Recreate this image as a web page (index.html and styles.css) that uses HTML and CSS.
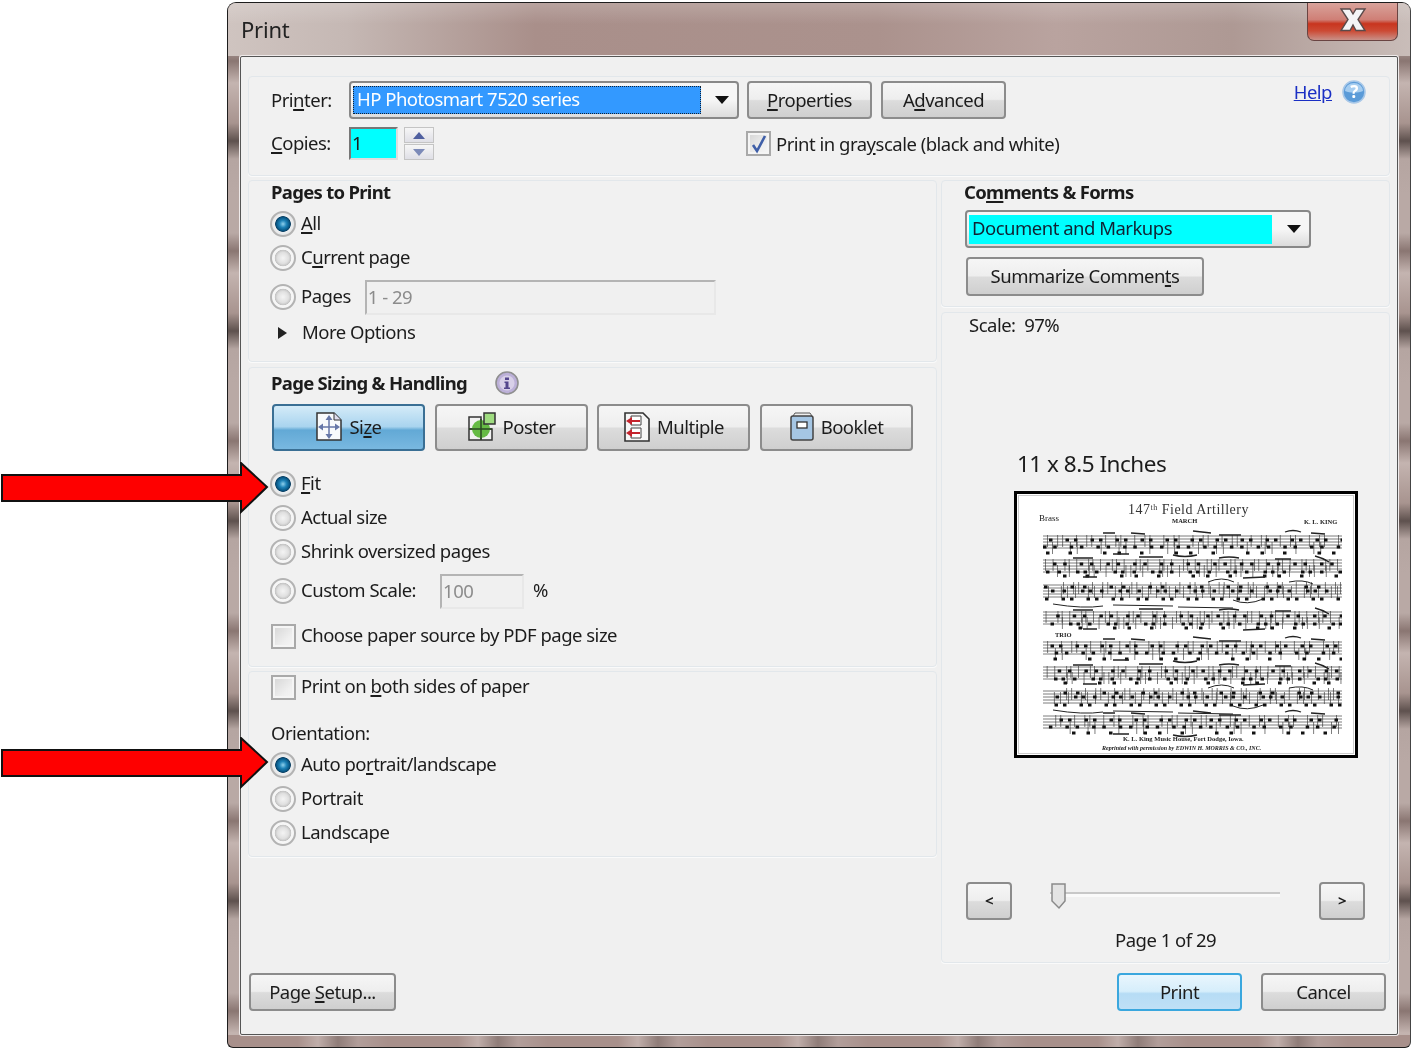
FILE: index.html
```html
<!DOCTYPE html>
<html lang="en">
<head>
<meta charset="utf-8">
<title>Print</title>
<link rel="stylesheet" href="styles.css">
</head>
<body>
<div class="window">
  <header class="titlebar">
    <span class="title">Print</span>
    <button class="close" aria-label="Close"><svg width="32" height="26" viewBox="0 0 30 26"><path d="M3 2h9l3 5 3-5h9l-7 10.500 7 11h-9l-3-5.500-3 5.500H3l7-11z" fill="#f4f4f6" stroke="#5a4a4a" stroke-width="1.400"/></svg></button>
  </header>
  <main class="client">
    <section class="panel top">
      <div class="row r1">
        <span class="lbl">Pri<u>n</u>ter:</span>
        <div class="select printer"><span class="sel-val">HP Photosmart 7520 series</span><i class="caret"></i></div>
        <button class="btn b125"><span><u>P</u>roperties</span></button>
        <button class="btn b125"><span>A<u>d</u>vanced</span></button>
        <a class="help">Help</a>
        <svg class="help-ic" width="24" height="24" viewBox="0 0 24 24"><circle cx="12" cy="12" r="11" fill="#5b9bd8" stroke="#a9c8e8" stroke-width="1.600"/><path d="M3 11a9 8 0 0 1 18 0c-5 2-13 2-18 0z" fill="#a6cdf0"/><text x="12" y="18" class="qm">?</text></svg>
      </div>
      <div class="row r2">
        <span class="lbl"><u>C</u>opies:</span>
        <div class="copies">1</div>
        <div class="spin"><b class="up"></b><b class="down"></b></div>
        <span class="check on gray"><svg width="16" height="20" viewBox="0 0 16 20"><path d="M2 11l4 6 8-15" fill="none" stroke="#3f5fa8" stroke-width="2.600"/></svg></span>
        <span class="txt">Print in gra<u>y</u>scale (black and white)</span>
      </div>
    </section>

    <div class="cols">
      <div class="col left">
        <section class="panel pages">
          <h2 class="ptitle">Pages to Print</h2>
          <div class="opt first"><i class="radio on"></i><span><u>A</u>ll</span></div>
          <div class="opt"><i class="radio"></i><span>C<u>u</u>rrent page</span></div>
          <div class="opt gap5"><i class="radio"></i><span>Pa<u>g</u>es</span><div class="field fpages">1 - 29</div></div>
          <div class="opt more"><i class="tri"></i><span>More Options</span></div>
        </section>
        <section class="panel sizing">
          <div class="ptitle-row"><h2 class="ptitle">Page Sizing &amp; Handling</h2>
            <svg width="26" height="26" viewBox="0 0 26 26"><circle cx="13" cy="13" r="11" fill="#bcb0d8" stroke="#8f8f8f" stroke-width="1.600"/><circle cx="13" cy="13" r="7.600" fill="#d8d0e8"/><path d="M11 7.500h4v2.400h-4zM10.500 11.500h4v6h1.500v1.500h-6v-1.500h1.500v-4.500h-1z" fill="#54468c"/></svg>
          </div>
          <div class="tabs">
            <button class="tab active">
              <svg width="28" height="31" viewBox="0 0 28 31"><path d="M2 2h17l7 7v20H2z" fill="#f8fafc" stroke="#333" stroke-width="1.500"/><path d="M19 2v7h7" fill="#dde" stroke="#333"/><path d="M14 6v19M5 16h18" stroke="#6677a8" stroke-width="1.500"/><path d="M14 4l-3.500 5h7zM14 28l-3.500-5h7zM3 16l5-3.500v7zM25 16l-5-3.500v7z" fill="#6677a8"/></svg>
              <span>Si<u>z</u>e</span>
            </button>
            <button class="tab">
              <svg width="30" height="31" viewBox="0 0 30 31"><path d="M2 6h12v12H2zM2 18h12v11H2zM14 18h11v11H14z" fill="#f2f2f2" stroke="#333" stroke-width="1.500"/><circle cx="14" cy="18" r="9" fill="#66bb44"/><path d="M14 8v21M2 18h23" stroke="#2a4a20" stroke-width="1.500"/><path d="M17 2h11v11H17z" fill="#9fdc80" stroke="#333" stroke-width="1.500"/></svg>
              <span>Poster</span>
            </button>
            <button class="tab">
              <svg width="28" height="32" viewBox="0 0 28 32"><path d="M2 2h18l6 6v22H2z" fill="#f6f6f6" stroke="#333" stroke-width="1.600"/><path d="M8 5h10v9H8zM8 17h10v10H8z" fill="#fff" stroke="#444"/><path d="M3 10l6-4v3h8v2H9v3zM3 22l6-4v3h8v2H9v3z" fill="#c4232c"/></svg>
              <span>Multiple</span>
            </button>
            <button class="tab">
              <svg width="26" height="31" viewBox="0 0 26 31"><path d="M4 5l2-3h15l2 3" fill="#eee" stroke="#555"/><rect x="2" y="5" width="22" height="24" rx="2" fill="#a5c6e4" stroke="#444" stroke-width="1.500"/><rect x="8" y="11" width="10" height="6" fill="#fff" stroke="#333" stroke-width="1.300"/></svg>
              <span>Booklet</span>
            </button>
          </div>
          <div class="opt fit"><i class="radio on"></i><span><u>F</u>it</span></div>
          <div class="opt"><i class="radio"></i><span>Actual size</span></div>
          <div class="opt"><i class="radio"></i><span>Shrink oversized pages</span></div>
          <div class="opt gap5"><i class="radio"></i><span>Custom Scale:</span><div class="field fscale">100</div><span class="pct">%</span></div>
          <div class="opt gap11"><i class="check"></i><span>Choose paper source by PDF page size</span></div>
        </section>
        <section class="panel orient">
          <div class="opt tight"><i class="check"></i><span>Print on <u>b</u>oth sides of paper</span></div>
          <div class="orient-lbl">Orientation:</div>
          <div class="opt"><i class="radio on"></i><span>Auto po<u>r</u>trait/landscape</span></div>
          <div class="opt"><i class="radio"></i><span>Portrait</span></div>
          <div class="opt"><i class="radio"></i><span>Landscape</span></div>
        </section>
      </div>

      <div class="col right">
        <section class="panel comments">
          <h2 class="ptitle">Co<u>m</u>ments &amp; Forms</h2>
          <div class="select docsel"><span class="sel-val cyan">Document and Markups</span><i class="caret"></i></div>
          <button class="btn summ"><span>Summarize Commen<u>t</u>s</span></button>
        </section>
        <section class="panel preview">
          <div class="scale">Scale:&nbsp; 97%</div>
          <div class="ptext">11 x 8.5 Inches</div>
          <div class="score">
            <svg width="338" height="261" viewBox="0 0 338 261">
              <defs>
                <path id="lines" class="sl" d="M0-6H299M0-3H299M0 0H299M0 3H299M0 6H299"/>
                <g id="st1">
                  <use href="#lines"/>
                  <path class="stem d1" d="M4-1H299"/><path class="stem d4" d="M9 6H299"/><path class="head h1" d="M0 5H299"/><path class="head h2" d="M6-2H299"/><path class="head h4" d="M3 11H299"/>
                  <path class="beam" d="M60-9h12M88-9l14 1M150-11l18 2M176-7h22M242-10q8-3 16 0M268-9l14 1M130 13q12 3 24 0M70 12h16"/>
                </g>
                <g id="st2">
                  <use href="#lines"/>
                  <path class="stem d2" d="M2-1H299"/><path class="stem d5" d="M14 5H299"/><path class="head h3" d="M3 6H299"/><path class="head h1" d="M10-2H299"/><path class="head h4" d="M20 10H299"/>
                  <path class="beam" d="M30-8h20M96-9h24M176-8q10-2 20 0M232-7h16M272-10q8 2 14 6M40 11h14M200 12l22-1"/>
                </g>
                <g id="st3">
                  <use href="#lines"/>
                  <path class="stem d3" d="M5 1H299"/><path class="stem d1" d="M20-3H299"/><path class="head h2" d="M2 8H299"/><path class="head h3" d="M8 0H299"/><path class="head h5" d="M1-4H299"/>
                  <path class="beam thick" d="M10 13q30 5 50 2M70 14l60 1M135 16l55 1M165-9q14-6 26 0M190 9q14 6 30-1M246-9q14-3 24 2"/>
                </g>
              </defs>
              <text x="111" y="20" class="sc-title">147<tspan class="sup" dy="-4">th</tspan><tspan dy="4"> Field  Artillery</tspan></text>
              <text x="155" y="29" class="sc-sm">MARCH</text>
              <text x="22" y="27" class="sc-sm wide">Brass</text>
              <text x="287" y="30" class="sc-sm">K. L. KING</text>
              <use href="#st1" x="26" y="48"/>
              <use href="#st2" x="26" y="72"/>
              <use href="#st3" x="26" y="97"/>
              <use href="#st2" x="26" y="124" class="o1"/>
              <text x="38" y="143" class="sc-sm">TRIO</text>
              <use href="#st1" x="26" y="154" class="o2"/>
              <use href="#st2" x="26" y="179" class="o3"/>
              <use href="#st3" x="26" y="203" class="o1"/>
              <use href="#st1" x="26" y="228" class="o4"/>
              <text x="106" y="247" class="sc-sm">K. L. King Music House, Fort Dodge, Iowa.</text>
              <text x="85" y="256" class="sc-sm it">Reprinted with permission by EDWIN H. MORRIS &amp; CO., INC.</text>
            </svg>
          </div>
          <div class="nav">
            <button class="btn nbtn"><span>&lt;</span></button>
            <div class="slider"><svg width="18" height="28" viewBox="0 0 18 28"><path d="M2 2h13v17l-6 7-7-7z" fill="#e4e4e4" stroke="#8a8a8a" stroke-width="1.500"/></svg></div>
            <button class="btn nbtn"><span>&gt;</span></button>
          </div>
          <div class="pageno">Page 1 of 29</div>
        </section>
      </div>
    </div>

    <footer class="foot">
      <button class="btn setup"><span>Page <u>S</u>etup...</span></button>
      <button class="btn b125 primary"><span>Print</span></button>
      <button class="btn b125"><span>Cancel</span></button>
    </footer>
  </main>
</div>

<svg class="arrow a1" width="272" height="54" viewBox="0 0 272 54"><path d="M2 13H241V1L267 25 241 50V39H2z" fill="#fe0000" stroke="#111" stroke-width="2"/></svg>
<svg class="arrow a2" width="272" height="54" viewBox="0 0 272 54"><path d="M2 13H241V1L267 25 241 50V39H2z" fill="#fe0000" stroke="#111" stroke-width="2"/></svg>
</body>
</html>
```

FILE: styles.css
```css
* { box-sizing: border-box; }
html, body { margin: 0; height: 1050px; overflow: hidden; background: #fff; }
body { font-family: "Noto Sans", "Open Sans", sans-serif; font-size: 18.500px; color: #1c1c1c; letter-spacing: -0.5px; position: relative; }
u { text-underline-offset: 2px; text-decoration-thickness: 1.500px; }
button { font: inherit; letter-spacing: inherit; color: inherit; padding: 0 0 2px; }

.window {
  width: 1184px; height: 1046px; margin: 2px 0 0 227px; padding: 0 12px 12px;
  border: 1px solid #1d1d1d; border-right-color: #444; border-radius: 9px 9px 6px 6px;
  background:
    repeating-linear-gradient(90deg, #a8908b 0 70px, #c0aeaa 90px, #8f7c78 110px, #b29e9a 130px, #a8908b 160px) bottom / 100% 12px no-repeat,
    repeating-linear-gradient(180deg, #b9a9a5 0 40px, #8a7672 58px, #c4b4b0 80px, #a8948f 120px, #5e514e 138px, #b5a5a1 156px, #b9a9a5 190px);
  filter: blur(0.45px);
}
.titlebar {
  height: 53px; margin: 0 -12px; padding: 0 12px 0 13px; display: flex; justify-content: space-between; align-items: flex-start;
  border-radius: 8px 8px 0 0;
  background:
    linear-gradient(180deg, rgba(255,255,255,.18), rgba(255,255,255,0) 40%),
    linear-gradient(90deg, #cfc4c0 0, #c5b8b4 10%, #a98f8a 26%, #ab928d 55%, #b9a39f 70%, #ae9994 85%, #c9bdb9 100%);
}
.title { font-size: 22px; line-height: 30px; margin-top: 11px; color: #222; letter-spacing: -0.2px; }
.close {
  width: 91px; height: 38px; border: 1px solid #6a4442; border-top: 0; border-radius: 0 0 7px 7px; display: flex; align-items: center; justify-content: center; padding-bottom: 3px;
  background: linear-gradient(180deg, #d9a39b 0, #cf7f76 45%, #c8351f 56%, #cc4a34 75%, #c99088 100%);
}
.client {
  width: 1158px; height: 979px; padding: 19px 7px 0; border: 1px solid #555; border-radius: 2px; background: #f0f0f0;
  box-shadow: 0 0 0 1px #efeaea;
  display: flex; flex-direction: column;
}
.panel { border: 1px solid #e2e7eb; border-radius: 4px; background: #f1f1f1; box-shadow: 0 1px 0 #fafafa; flex: none; }
.top { height: 100px; padding: 4px 23px 0 22px; }
.row { display: flex; align-items: center; }
.r1 { height: 38px; }
.r2 { height: 33px; margin-top: 8px; }
.lbl { width: 78px; margin-bottom: 2px; }
.txt { margin-bottom: 1px; }
.select { display: flex; align-items: center; height: 38px; border: 2px solid #888; border-radius: 4px; background: linear-gradient(#f6f6f6 50%, #dcdcdc); padding: 2px; }
.printer { width: 390px; margin-right: 8px; }
.sel-val { display: block; height: 28px; line-height: 26px; padding-left: 4px; flex: 1; }
.printer .sel-val { background: #3399ff; color: #fff; outline: 1px dotted #123; outline-offset: -1px; }
.cyan { background: #00ffff; color: #123; }
.caret { width: 34px; flex: none; height: 0; display: flex; justify-content: center; position: relative; }
.caret::after { content: ""; position: absolute; left: 14px; top: -4px; border: 7px solid transparent; border-top: 8px solid #111; border-bottom: 0; }
.btn {
  display: inline-flex; align-items: center; justify-content: center; height: 38px; border: 2px solid #8c8c8c; border-radius: 4px; flex: none;
  background: linear-gradient(180deg, #f6f6f6 0, #eeeeee 48%, #dcdcdc 52%, #cfcfcf 100%);
}
.b125 { width: 125px; margin-right: 9px; }
.help { margin-left: auto; align-self: flex-start; margin-top: -2px; color: #1a2fc4; text-decoration: underline; line-height: 26px; }
.help-ic { align-self: flex-start; margin: -1px 0 0 10px; }
.qm { font-size: 17px; font-weight: 700; fill: #fff; text-anchor: middle; }
.copies { width: 49px; height: 33px; background: #00ffff; border: 2px solid #777; border-right-color: #ddd; border-bottom-color: #ddd; line-height: 27px; padding-left: 1px; }
.spin { width: 30px; height: 33px; margin-left: 6px; display: flex; flex-direction: column; gap: 1px; }
.spin b { flex: 1; border: 1px solid #c4c4c4; background: linear-gradient(#f6f6f6, #dfdfe6); position: relative; }
.spin b::after { content: ""; position: absolute; left: 8px; top: 4px; border: 6px solid transparent; }
.up::after { border-bottom: 7px solid #4f5f9f !important; border-top: 0 !important; }
.down::after { border-top: 7px solid #7c8ab8 !important; border-bottom: 0 !important; }
.gray { margin-left: 312px; margin-right: 5px; }
.check { width: 25px; height: 25px; flex: none; border: 2px solid #a9a9a9; background: linear-gradient(135deg, #d4d4d4, #efefef 65%, #f6f6f6); box-shadow: inset 0 0 0 2px #f5f5f5; display: flex; align-items: center; justify-content: center; }
.cols { display: flex; gap: 4px; margin-top: 4px; flex: none; height: 783px; }
.col { display: flex; flex-direction: column; }
.left { width: 689px; }
.right { width: 449px; }
.pages { height: 182px; padding: 0 22px; }
.sizing { height: 300px; margin-top: 5px; padding: 3px 22px 0; }
.orient { height: 186px; margin-top: 4px; padding: 0 22px; }
.ptitle { margin: 0; font-size: 18.500px; font-weight: 700; line-height: 21px; padding-bottom: 2px; letter-spacing: -0.7px; }
.ptitle-row { display: flex; align-items: center; gap: 27px; height: 24px; }
.opt { height: 34px; display: flex; align-items: center; gap: 5px; }
.opt > span { margin-bottom: 3px; }
.opt.first { margin-top: 3px; }
.gap5 { margin-top: 5px; }
.gap11 { margin-top: 11px; }
.radio { width: 26px; height: 26px; flex: none; margin-left: -1px; border-radius: 50%; border: 2px solid #b3b3b3; background: radial-gradient(circle closest-side, #f4f4f4 0, #e0e0e0 50%, #c4c4c4 72%, #f6f6f6 78%); }
.radio.on { background: radial-gradient(circle closest-side at 50% 50%, #8fd0ec 0, #1f83b8 32%, #075583 60%, #0a3f62 68%, #eef0f2 74%, #e6e6e6 100%); }
.field { height: 35px; border: 2px solid #b4b4b4; border-right-color: #e8e8e8; border-bottom-color: #e8e8e8; color: #8c8c8c; line-height: 29px; padding-left: 1px; background: #f0f0f0; }
.fpages { width: 351px; margin-left: 9px; }
.fscale { width: 84px; margin-left: 19px; }
.pct { margin-left: 4px; }
.more { margin-top: 2px; padding-left: 7px; }
.tri { border: 6px solid transparent; border-left: 9px solid #222; border-right: 0; margin-right: 10px; }
.tabs { display: flex; gap: 9.500px; margin: 9px 0 16px 1px; }
.tab {
  width: 153px; height: 47px; flex: none; display: flex; align-items: center; justify-content: center; gap: 6px; border: 2px solid #8c8c8c; border-radius: 4px; padding-bottom: 2px;
  background: linear-gradient(180deg, #f6f6f6 0, #eeeeee 48%, #dcdcdc 52%, #cfcfcf 100%);
}
.tab.active { border-color: #3a6f94; background: linear-gradient(180deg, #d4ebf8 0, #a9d4ef 48%, #62a9d6 56%, #79b8e0 100%); }
.primary { border-color: #3aa7de; margin-left: auto; margin-right: 19px; background: linear-gradient(180deg, #e9f6fd 0, #d6eefb 48%, #b6dcf5 55%, #bfe0f6 100%); }
.fit { margin-top: 0; }
.tight { height: 30px; }
.orient-lbl { height: 24px; line-height: 22px; margin: 20px 0 2px; }
.comments { height: 127px; padding: 0 22px; }
.comments .ptitle { margin-bottom: 6px; }
.docsel { width: 346px; margin-left: 1px; }
.docsel .sel-val { padding-left: 3px; height: 29px; }
.docsel .caret { width: 35px; }
.docsel .caret::after { left: 15px; }
.summ { width: 238px; height: 39px; margin: 9px 0 0 2px; }
.preview { height: 651px; margin-top: 5px; }
.scale { height: 26px; line-height: 24px; padding-left: 27px; }
.ptext { font-size: 22.500px; height: 30px; line-height: 30px; margin: 110px 0 0 75px; letter-spacing: -0.5px; }
.score { width: 344px; height: 267px; margin: 12px 0 0 72px; border: 3px solid #000; outline: 1px solid #ccc; outline-offset: -5px; background: #fff; }
.score svg { display: block; filter: blur(0.6px); letter-spacing: 0; }
.sl { stroke: #5c5c5c; stroke-width: .8; fill: none; }
.stem { stroke: #333; stroke-width: 12; fill: none; opacity: .7; }
.d1 { stroke-dasharray: .9 9.300 .9 4.100 .9 13; }
.d2 { stroke-dasharray: .9 6.700 .9 11 .9 3.300; }
.d3 { stroke-dasharray: .9 12 .9 5.300 .9 7; }
.d4 { stroke-dasharray: .9 17 .9 6 .9 23; }
.d5 { stroke-dasharray: .9 11 .9 19 .9 4; }
.head { stroke: #111; fill: none; stroke-width: 3; }
.h1 { stroke-dasharray: 3.500 6.700 3.500 13; }
.h2 { stroke-dasharray: 3.500 13 3.500 5; }
.h3 { stroke-dasharray: 3.500 8 3.500 15 3.500 4; }
.h4 { stroke-dasharray: 3.500 19 3.500 31 3.500 11; }
.h5 { stroke-dasharray: 3.500 23 3.500 9; }
.o1 { stroke-dashoffset: 7; }
.o2 { stroke-dashoffset: 15; }
.o3 { stroke-dashoffset: 22; }
.o4 { stroke-dashoffset: 31; }
.beam { stroke: #222; stroke-width: 1.300; fill: none; }
.thick { stroke-width: 1; }
.sc-title { font-family: "Liberation Serif", serif; font-size: 14px; letter-spacing: .5px; fill: #333; }
.sup { font-size: 8px; }
.sc-sm { font-family: "Liberation Serif", serif; font-size: 6.500px; letter-spacing: 0; fill: #222; font-weight: 700; }
.wide { font-size: 9px; font-weight: 400; }
.it { font-style: italic; font-size: 6px; }
.nav { display: flex; align-items: flex-start; padding: 0 24px; margin-top: 124px; }
.nbtn { width: 46px; font-weight: 700; font-size: 15px; }
.slider { flex: 1; margin-left: 38px; margin-right: 39px; height: 28px; position: relative; display: flex; align-items: flex-start; background: linear-gradient(#c8c8c8, #c8c8c8) 0 10px / 100% 2px no-repeat, linear-gradient(#fafafa, #fafafa) 0 12px / 100% 3px no-repeat; }
.pageno { text-align: center; height: 24px; line-height: 22px; margin-top: 9px; }
.foot { display: flex; margin-top: 10px; padding: 0 4px 0 1px; }
.foot .btn:last-child { margin-right: 0; }
.setup { width: 147px; }
.arrow { position: absolute; left: 0; }
.a1 { top: 462px; }
.a2 { top: 737px; }
```
